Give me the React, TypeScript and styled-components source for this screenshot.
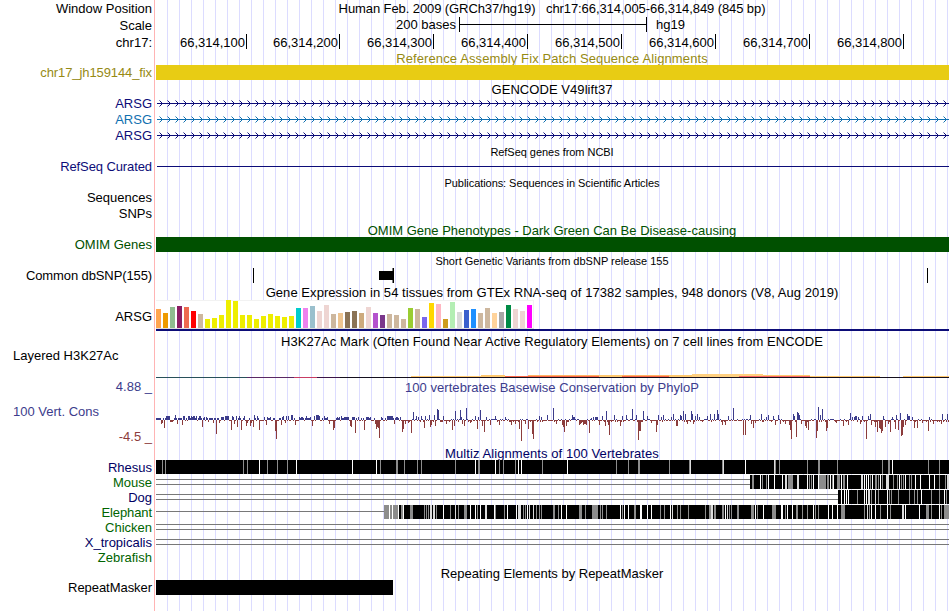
import type { ReactNode } from 'react'
import styled, { createGlobalStyle } from 'styled-components'

const NAVY = '#0c0c78'
const TEAL = '#1070b0'
const GREEN = '#005000'
const SPECIES_GREEN = '#006400'
const GOLD = '#968a14'
const CONS_BLUE = '#3c3c8c'
const CONS_RED = '#8c3c3c'

const DATA_START = 156
const DATA_WIDTH = 793

// ---- track data ----

const ticks = [246, 339, 433, 527, 621, 715, 809, 903]

const tissues: [string, number][] = [
	['#ffa54f', 19], ['#ee9a00', 15], ['#8fbc8f', 21], ['#8b1c62', 22], ['#ee6a50', 21], ['#ff0000', 17],
	['#cdb79e', 14], ['#eeee00', 9], ['#eeee00', 10], ['#eeee00', 13], ['#eeee00', 28], ['#eeee00', 27],
	['#eeee00', 13], ['#eeee00', 13], ['#eeee00', 9], ['#eeee00', 12], ['#eeee00', 14], ['#eeee00', 12],
	['#eeee00', 11], ['#eeee00', 12], ['#00cdcd', 20], ['#ee82ee', 20], ['#9ac0cd', 22], ['#eed5d2', 17],
	['#eed5d2', 23], ['#cdb79e', 14], ['#eec591', 15], ['#8b7355', 16], ['#8b7355', 17], ['#cdaa7d', 15],
	['#eed5d2', 21], ['#b452cd', 15], ['#7a378b', 13], ['#cdb79e', 14], ['#cdb79e', 13], ['#cdb79e', 9],
	['#9acd32', 20], ['#cdb79e', 19], ['#7a67ee', 11], ['#ffd700', 25], ['#ffb6c1', 24], ['#cd9b1d', 9],
	['#b4eeb4', 26], ['#d9d9d9', 16], ['#3a5fcd', 18], ['#1e90ff', 19], ['#cdb79e', 15], ['#cdb79e', 20],
	['#ffd39b', 15], ['#a6a6a6', 16], ['#008b45', 23], ['#eed5d2', 19], ['#eed5d2', 17], ['#ff00ff', 23],
]

// x, y inside the row, width, height, colour
const histone: [number, number, number, number, string][] = [
	[411, 27, 70, 1, '#ffc86e'], [481, 26, 24, 2, '#ffc86e'], [505, 27, 94, 1, '#fa6446'], [528, 26, 71, 1, '#ffb464'],
	[599, 26, 23, 2, '#ffc86e'], [622, 27, 47, 1, '#fa6446'], [622, 26, 47, 1, '#ffb464'], [669, 26, 23, 2, '#ffc86e'],
	[692, 25, 71, 3, '#ffd080'], [739, 27, 71, 1, '#fa6464'], [763, 26, 47, 1, '#ffc86e'],
	[810, 27, 70, 1, '#ffc86e'], [903, 27, 46, 1, '#ffc86e'],
	[156, 28, 91, 1, '#28505a'], [247, 28, 47, 1, '#5a2864'], [294, 28, 23, 1, '#c83c64'], [317, 28, 23, 1, '#3c1446'],
	[340, 28, 609, 1, '#140f1e'],
]

const conservation: [number, number][] = [
	[156, 2], [157, 2], [158, 2], [159, 2], [160, 2], [161, -4], [162, -3], [163, 2], [164, -8], [165, 2], [166, 4], [167, 4],
	[168, 4], [169, 4], [170, -2], [171, -2], [172, -2], [174, 2], [175, 5], [176, 2], [177, -4], [178, 2], [179, 2], [180, 2],
	[181, 2], [182, -5], [183, 4], [184, 4], [188, 4], [189, 4], [190, 2], [191, 4], [192, 3], [193, 4], [194, 4], [195, 2],
	[196, 4], [198, 2], [199, 4], [200, 4], [202, -7], [204, 3], [206, 3], [208, -2], [209, 2], [210, 2], [211, 2], [213, -3],
	[214, 2], [215, 2], [216, -14], [217, 2], [218, 2], [219, -3], [221, 3], [222, 3], [223, 3], [225, 4], [226, 4], [227, 4],
	[228, 4], [231, -10], [232, 4], [233, 3], [234, -4], [236, 4], [237, -7], [239, 4], [240, 2], [241, -10], [244, 4], [246, -6],
	[247, -3], [250, -6], [251, -3], [253, -7], [254, 5], [257, 4], [259, -10], [264, 3], [266, -5], [267, 3], [270, 3],
	[275, -11], [276, -19], [281, -5], [282, 3], [283, 4], [285, -3], [286, 4], [288, 4], [291, 5], [292, 5], [295, -5],
	[299, 3], [301, 3], [302, 3], [303, 2], [306, 4], [310, 3], [312, -6], [314, 4], [316, 5], [317, 5], [318, 5], [319, 4],
	[324, 4], [327, 3], [329, -4], [333, -10], [334, -8], [337, 3], [339, 3], [341, 4], [344, 3], [345, 3], [346, 3], [347, 3],
	[348, 3], [350, -6], [351, -7], [352, 3], [353, 3], [354, 3], [355, -13], [358, 3], [361, 2], [364, -10], [366, 3],
	[367, 3], [368, 3], [370, 3], [375, -4], [376, -9], [377, -7], [378, -8], [379, -18], [381, 3], [387, 4], [388, 4], [389, 4],
	[390, 4], [391, 4], [392, 4], [394, -4], [396, 3], [397, 3], [400, 3], [402, -12], [403, -9], [405, -4], [408, -3],
	[411, -13], [413, 8], [416, 4], [418, 3], [421, 4], [424, -8], [425, 4], [429, 5], [430, -7], [431, -5], [434, 5], [435, -6],
	[437, 11], [438, 10], [443, 4], [446, -4], [452, -10], [454, -6], [455, 9], [460, 10], [461, 3], [462, -4], [464, -6],
	[466, 12], [470, -3], [475, 4], [477, -9], [478, 3], [480, 10], [482, -6], [484, -12], [486, 3], [490, -5], [495, 4],
	[499, -5], [505, 3], [511, -5], [515, -4], [519, -9], [521, -21], [525, -4], [528, -9], [532, -14], [533, -19], [539, 4],
	[541, 3], [547, 5], [553, 12], [556, -4], [562, -5], [563, -7], [564, -12], [566, -6], [572, 5], [573, 3], [574, 3],
	[579, -5], [580, -4], [581, -3], [583, -5], [584, -4], [585, -4], [586, -5], [589, -13], [591, 2], [593, 3], [595, 3], [596, 3],
	[597, 3], [599, -5], [602, 4], [605, -6], [606, 9], [608, -5], [609, -15], [614, 5], [620, -6], [622, 4], [626, 5],
	[632, 11], [636, 5], [638, -20], [639, -11], [640, -11], [643, 9], [647, 4], [651, -3], [656, -12], [657, -5], [658, 5],
	[661, 3], [663, 5], [671, 3], [673, 6], [676, -6], [677, -6], [680, 5], [681, 4], [683, 9], [685, 6], [687, -4], [691, 9],
	[692, 6], [693, -4], [695, 4], [697, 6], [699, 3], [707, 4], [710, 6], [714, 6], [717, 10], [718, 6], [722, -5], [725, -5],
	[728, 4], [733, 12], [743, -15], [745, -15], [750, 5], [751, -4], [753, -8], [755, -3], [761, 6], [766, 3], [768, 5],
	[773, 4], [775, -5], [778, 5], [780, -4], [785, -4], [789, -5], [790, -10], [791, -19], [793, 6], [794, 4], [796, -17],
	[797, 8], [798, 7], [799, 5], [801, -4], [805, -6], [806, -8], [808, -10], [816, -18], [817, -11], [818, 13], [820, 5],
	[822, 11], [826, -11], [827, -8], [836, -3], [843, -6], [848, -5], [850, 7], [852, 3], [854, 3], [855, 4], [856, 4],
	[858, 3], [860, -4], [862, 4], [866, -19], [868, 4], [870, 6], [871, -5], [875, -7], [877, -12], [879, -8], [880, -9],
	[881, -13], [882, -11], [883, 4], [885, -7], [888, -4], [890, -12], [892, 3], [895, -9], [896, 5], [898, -10], [900, 7],
	[901, -16], [902, -15], [903, -7], [905, -5], [907, 6], [908, 4], [909, 4], [912, 3], [914, -8], [917, -8], [922, -3],
	[928, -11], [929, 3], [933, -4], [941, -4], [942, 6], [947, 6],
]

// x, width, kind: g = grey, l = light, w = white
type Stripe = [number, number, 'g' | 'l' | 'w']

const rhesus: Stripe[] = [
	[162, 1, 'g'], [165, 1, 'g'], [243, 1, 'g'], [247, 1, 'g'], [259, 1, 'w'], [267, 1, 'g'], [277, 1, 'g'], [287, 1, 'g'],
	[296, 1, 'w'], [352, 1, 'w'], [376, 1, 'w'], [380, 1, 'g'], [396, 2, 'g'], [404, 1, 'g'], [417, 1, 'g'], [421, 1, 'g'],
	[455, 1, 'g'], [475, 1, 'w'], [478, 2, 'g'], [495, 1, 'w'], [499, 1, 'g'], [503, 1, 'g'], [515, 1, 'g'], [518, 1, 'w'],
	[521, 1, 'w'], [542, 1, 'g'], [567, 1, 'w'], [616, 1, 'g'], [628, 1, 'g'], [638, 2, 'g'], [669, 1, 'g'], [689, 1, 'g'],
	[690, 1, 'l'], [722, 1, 'g'], [723, 1, 'l'], [745, 1, 'w'], [774, 1, 'l'], [775, 1, 'g'], [779, 1, 'g'], [807, 1, 'g'],
	[818, 2, 'g'], [837, 1, 'g'], [882, 1, 'g'], [888, 2, 'g'], [892, 1, 'w'], [928, 1, 'g'], [939, 1, 'g'],
]

const mouse: Stripe[] = [
	[752, 2, 'g'], [760, 1, 'w'], [762, 1, 'g'], [766, 1, 'g'], [768, 1, 'w'], [774, 1, 'w'], [782, 1, 'w'], [785, 2, 'l'],
	[788, 5, 'g'], [797, 2, 'l'], [807, 1, 'w'], [809, 1, 'g'], [811, 1, 'g'], [813, 1, 'w'], [818, 1, 'w'], [819, 7, 'g'],
	[827, 2, 'g'], [830, 1, 'w'], [832, 1, 'g'], [833, 1, 'w'], [837, 3, 'g'], [841, 1, 'w'], [843, 2, 'g'], [847, 1, 'w'],
	[861, 2, 'l'], [864, 1, 'w'], [866, 1, 'w'], [868, 1, 'w'], [870, 1, 'g'], [872, 1, 'w'], [875, 2, 'g'], [878, 1, 'g'],
	[880, 1, 'w'], [882, 1, 'g'], [886, 3, 'l'], [893, 1, 'g'], [897, 1, 'g'], [899, 1, 'w'], [901, 1, 'g'], [903, 1, 'g'],
	[905, 1, 'w'], [909, 1, 'g'], [911, 1, 'g'], [915, 1, 'w'], [920, 1, 'w'], [929, 1, 'w'], [934, 1, 'w'], [939, 1, 'g'],
	[945, 1, 'g'], [947, 2, 'l'],
]

const dog: Stripe[] = [
	[841, 1, 'w'], [844, 1, 'w'], [846, 1, 'w'], [848, 1, 'w'], [857, 1, 'g'], [864, 1, 'w'], [866, 1, 'w'], [868, 2, 'l'],
	[871, 1, 'g'], [875, 1, 'l'], [878, 1, 'g'], [887, 1, 'w'], [889, 1, 'g'], [891, 1, 'g'], [898, 1, 'g'], [909, 1, 'g'],
	[914, 1, 'g'], [917, 1, 'g'], [921, 1, 'w'], [931, 1, 'g'], [939, 1, 'g'], [944, 1, 'w'], [946, 1, 'g'],
]

const elephant: Stripe[] = [
	[384, 5, 'g'], [389, 1, 'w'], [390, 2, 'g'], [392, 1, 'w'], [393, 5, 'g'], [398, 1, 'w'], [401, 2, 'g'], [403, 1, 'w'],
	[410, 3, 'g'], [424, 1, 'g'], [426, 1, 'g'], [428, 1, 'g'], [430, 2, 'l'], [433, 2, 'l'], [436, 1, 'g'], [443, 1, 'w'],
	[450, 1, 'g'], [455, 1, 'l'], [458, 1, 'g'], [464, 3, 'g'], [470, 1, 'w'], [475, 1, 'w'], [477, 1, 'g'], [480, 1, 'w'],
	[485, 2, 'l'], [494, 1, 'w'], [495, 1, 'g'], [504, 1, 'g'], [507, 1, 'w'], [516, 1, 'w'], [518, 3, 'l'], [523, 1, 'g'],
	[525, 1, 'g'], [527, 1, 'w'], [529, 1, 'l'], [533, 1, 'l'], [536, 1, 'g'], [539, 1, 'g'], [541, 1, 'g'], [553, 2, 'g'],
	[558, 1, 'g'], [561, 1, 'w'], [566, 1, 'w'], [579, 3, 'g'], [585, 1, 'g'], [592, 6, 'g'], [600, 1, 'g'], [602, 1, 'g'],
	[606, 1, 'g'], [620, 1, 'w'], [622, 1, 'g'], [624, 1, 'w'], [628, 1, 'w'], [634, 2, 'g'], [640, 2, 'w'], [647, 1, 'w'],
	[651, 1, 'w'], [660, 1, 'g'], [664, 1, 'g'], [670, 1, 'w'], [672, 1, 'l'], [677, 1, 'g'], [680, 1, 'g'], [688, 1, 'g'],
	[705, 1, 'g'], [709, 2, 'g'], [711, 2, 'l'], [714, 2, 'g'], [722, 2, 'g'], [725, 1, 'w'], [727, 1, 'l'], [729, 1, 'g'],
	[731, 1, 'g'], [737, 2, 'g'], [751, 3, 'g'], [755, 1, 'w'], [757, 1, 'g'], [763, 1, 'w'], [772, 4, 'g'], [781, 2, 'w'],
	[785, 1, 'g'], [787, 1, 'w'], [792, 1, 'w'], [796, 2, 'g'], [802, 1, 'g'], [807, 1, 'g'], [813, 1, 'w'], [815, 1, 'g'],
	[818, 1, 'g'], [828, 1, 'w'], [832, 1, 'w'], [837, 1, 'w'], [841, 4, 'g'], [864, 1, 'g'], [867, 1, 'l'], [869, 1, 'g'],
	[871, 1, 'w'], [875, 1, 'w'], [880, 1, 'g'], [887, 1, 'w'], [890, 1, 'g'], [902, 2, 'l'], [905, 1, 'w'], [919, 1, 'w'],
	[926, 3, 'g'], [931, 1, 'g'], [939, 1, 'w'], [941, 1, 'g'], [944, 5, 'g'],
]

const shades = { g: '#8c8c8c', l: '#dcdcdc', w: '#ffffff' }

// ---- drawings ----

const Drawing = ({ height, children }: { height: number, children: ReactNode }) => (
	<Svg width={DATA_WIDTH} height={height} viewBox={`${DATA_START} 0 ${DATA_WIDTH} ${height}`} shapeRendering="crispEdges">
		{children}
	</Svg>
)

const GeneArrows = ({ color }: { color: string }) => {
	const arrows = []
	for (let x = 159; x < 949; x += 8) {
		arrows.push(`M${x + 0.5} 4.5l3 3l-3 3`)
	}
	return (
		<Drawing height={16}>
			<rect x={157} y={7} width={792} height={1} fill={color} />
			<path d={arrows.join('')} fill="none" stroke={color} strokeWidth={1} shapeRendering="auto" />
		</Drawing>
	)
}

const Expression = () => (
	<Drawing height={31}>
		<rect x={156} y={0} width={378} height={28} fill="#ffffff" />
		<rect x={156} y={0} width={378} height={1} fill="#f2f2f2" />
		<rect x={533} y={0} width={1} height={28} fill="#f2f2f2" />
		<rect x={156} y={28} width={378} height={1} fill="#dcdcdc" />
		{tissues.map(([color, h], i) => (
			<rect key={i} x={156 + i * 7} y={28 - h} width={5} height={h} fill={color} />
		))}
		<rect x={156} y={29} width={793} height={2} fill={NAVY} />
	</Drawing>
)

const Conservation = () => {
	const known = new Map(conservation)
	const columns = []
	for (let x = DATA_START; x < 949; x++) {
		const seed = (x * 37 + (x * x) % 23) % 11
		const filler = x < 400 ? (seed < 4 ? 2 : -1) : (seed < 3 ? 1 : seed > 8 ? -2 : -1)
		columns.push({ x, value: known.get(x) ?? filler })
	}
	return (
		<Drawing height={50}>
			{columns.map(({ x, value }) => (
				<rect
					key={x}
					x={x}
					y={value > 0 ? 24 - value : 24}
					width={1}
					height={Math.abs(value)}
					fill={value > 0 ? CONS_BLUE : CONS_RED}
				/>
			))}
		</Drawing>
	)
}

const Alignment = ({ lines = [], from, stripes = [] }: { lines?: number[], from?: number, stripes?: Stripe[] }) => (
	<Drawing height={15}>
		{lines.map(y => (
			<rect key={y} x={156} y={y} width={(from ?? 949) - 156} height={1} fill="#787878" />
		))}
		{from && <rect x={from} y={0} width={949 - from} height={14} fill="#000000" />}
		{stripes.map(([x, w, kind]) => (
			<rect key={x} x={x} y={0} width={w} height={14} fill={shades[kind]} />
		))}
	</Drawing>
)

type TitleProps = {
	height: number
	color?: string
	small?: boolean
	spacing?: number
	drop?: number
	clipped?: boolean
	label?: ReactNode
	children: string
}

const TitleRow = ({ height, color, small, spacing, drop = 1, clipped, label, children }: TitleProps) => (
	<Row $height={height}>
		<Label>{label}</Label>
		<Title $color={color} $small={small} $spacing={spacing} $drop={drop} $clipped={clipped}>{children}</Title>
	</Row>
)

type TrackProps = { height: number, name: string, color?: string, spacing?: number, children?: ReactNode }

const Track = ({ height, name, color, spacing, children }: TrackProps) => (
	<Row $height={height}>
		<Label $color={color} $spacing={spacing}>{name}</Label>
		<Data>{children}</Data>
	</Row>
)

const App = () => {

	return (
		<Browser>
			<GlobalStyle />
			<TitleRow height={17} spacing={-0.09} drop={0} label="Window Position">{'Human Feb. 2009 (GRCh37/hg19)   chr17:66,314,005-66,314,849 (845 bp)'}</TitleRow>
			<Row $height={17}>
				<Label>Scale</Label>
				<ScaleBar>
					<ScaleText>200 bases</ScaleText>
					<ScaleLine />
					<ScaleText>hg19</ScaleText>
				</ScaleBar>
			</Row>
			<Row $height={17}>
				<Label>chr17:</Label>
				<Ruler>
					{ticks.map((x, i) => (
						<Tick key={x} $width={x + 1 - (i ? ticks[i - 1] + 1 : DATA_START)}>66,314,{i + 1}00</Tick>
					))}
				</Ruler>
			</Row>

			<TitleRow height={14} color={GOLD} spacing={0.11} clipped>Reference Assembly Fix Patch Sequence Alignments</TitleRow>
			<Track height={15} name="chr17_jh159144_fix" color={GOLD} spacing={-0.1}><Bar $color="#e8cc14" /></Track>

			<TitleRow height={16} spacing={0.06} drop={2}>GENCODE V49lift37</TitleRow>
			<Track height={16} name="ARSG" color={NAVY}><GeneArrows color={NAVY} /></Track>
			<Track height={16} name="ARSG" color={TEAL}><GeneArrows color={TEAL} /></Track>
			<Track height={16} name="ARSG" color={NAVY}><GeneArrows color={NAVY} /></Track>

			<TitleRow height={15} small spacing={-0.04}>RefSeq genes from NCBI</TitleRow>
			<Track height={16} name="RefSeq Curated" color={NAVY} spacing={-0.1}>
				<Drawing height={16}><rect x={157} y={7} width={792} height={1} fill={NAVY} /></Drawing>
			</Track>

			<TitleRow height={15} small spacing={-0.06}>Publications: Sequences in Scientific Articles</TitleRow>
			<Track height={16} name="Sequences" />
			<Track height={16} name="SNPs" />

			<TitleRow height={15} color={GREEN} clipped>OMIM Gene Phenotypes - Dark Green Can Be Disease-causing</TitleRow>
			<Track height={15} name="OMIM Genes" color={GREEN}><Bar $color={GREEN} /></Track>

			<TitleRow height={16} small>Short Genetic Variants from dbSNP release 155</TitleRow>
			<Track height={16} name="Common dbSNP(155)" spacing={-0.11}>
				<Drawing height={16}>
					<rect x={253} y={0} width={1} height={15} />
					<rect x={392} y={0} width={1} height={15} fill="#808080" />
					<rect x={379} y={3} width={14} height={9} />
					<rect x={393} y={0} width={1} height={15} />
					<rect x={927} y={0} width={1} height={15} />
				</Drawing>
			</Track>

			<TitleRow height={16} spacing={0.06}>Gene Expression in 54 tissues from GTEx RNA-seq of 17382 samples, 948 donors (V8, Aug 2019)</TitleRow>
			<Row $height={31}>
				<Label $drop={1}>ARSG</Label>
				<Data><Expression /></Data>
			</Row>

			<TitleRow height={18} spacing={0.05} drop={2}>H3K27Ac Mark (Often Found Near Active Regulatory Elements) on 7 cell lines from ENCODE</TitleRow>
			<Row $height={29}>
				<WiggleName $height={14}>Layered H3K27Ac</WiggleName>
				<Data>
					<Drawing height={29}>
						{histone.map(([x, y, w, h, color], i) => (
							<rect key={i} x={x} y={y} width={w} height={h} fill={color} />
						))}
					</Drawing>
				</Data>
			</Row>

			<TitleRow height={18} color={CONS_BLUE} spacing={0.04} label={<Limit $color={CONS_BLUE}>4.88 _</Limit>}>100 vertebrates Basewise Conservation by PhyloP</TitleRow>
			<Row $height={50}>
				<WiggleLabels>
					<WiggleName $height={32} $color={CONS_BLUE}>100 Vert. Cons</WiggleName>
					<Limit $color={CONS_RED} $inset={4}>-4.5 _</Limit>
				</WiggleLabels>
				<Data><Conservation /></Data>
			</Row>

			<TitleRow height={14} color="#000064" spacing={0.08}>Multiz Alignments of 100 Vertebrates</TitleRow>
			<Track height={15} name="Rhesus" color="#000064"><Alignment from={156} stripes={rhesus} /></Track>
			<Track height={15} name="Mouse" color={SPECIES_GREEN}><Alignment lines={[4, 9]} from={750} stripes={mouse} /></Track>
			<Track height={15} name="Dog" color="#000064"><Alignment lines={[4, 9]} from={838} stripes={dog} /></Track>
			<Track height={15} name="Elephant" color={SPECIES_GREEN} spacing={-0.1}><Alignment lines={[6]} from={384} stripes={elephant} /></Track>
			<Track height={15} name="Chicken" color={SPECIES_GREEN}><Alignment lines={[4, 9]} /></Track>
			<Track height={15} name="X_tropicalis" color="#000064"><Alignment lines={[4, 9]} /></Track>
			<Track height={15} name="Zebrafish" color={SPECIES_GREEN} />

			<TitleRow height={15}>Repeating Elements by RepeatMasker</TitleRow>
			<Track height={15} name="RepeatMasker" spacing={-0.05}><Bar $color="#000000" $width={237} /></Track>
		</Browser>
	)
}


export default App

const GlobalStyle = createGlobalStyle`
	body {
		margin: 0;
		background: #ffffff;
	}
`;

const Browser = styled.div`
	display: flex;
	flex-direction: column;
	width: 949px;
	height: 611px;
	overflow: hidden;
	font-family: "Liberation Sans", Arial, sans-serif;
	font-size: 13px;
	color: #000000;
	white-space: pre;
	background:
		linear-gradient(#ffb4b4, #ffb4b4) 154px 0 / 1px 100% no-repeat,
		repeating-linear-gradient(to right, #dcdcff 0 1px, transparent 1px 12px) 167px 0 / 782px 100% no-repeat;
`;

const Row = styled.div<{ $height: number }>`
	display: grid;
	grid-template-columns: 156px 793px;
	flex: none;
	height: ${p => p.$height}px;
	line-height: ${p => p.$height}px;
`;

const Label = styled.div<{ $color?: string, $spacing?: number, $drop?: number }>`
	padding-top: ${p => p.$drop ?? 0}px;
	padding-right: 4px;
	text-align: right;
	letter-spacing: ${p => p.$spacing ?? 0}px;
	color: ${p => p.$color ?? 'inherit'};
`;

// a clipped title loses its descenders where the solid bar below begins
const Title = styled.div<{ $color?: string, $small?: boolean, $spacing?: number, $drop: number, $clipped?: boolean }>`
	box-sizing: border-box;
	height: 100%;
	padding-top: ${p => p.$drop}px;
	padding-right: 1px;
	overflow: ${p => p.$clipped ? 'hidden' : 'visible'};
	text-align: center;
	font-size: ${p => p.$small ? 11 : 13}px;
	letter-spacing: ${p => p.$spacing ?? 0}px;
	color: ${p => p.$color ?? 'inherit'};
`;

const Data = styled.div`
	min-width: 0;
`;

const Svg = styled.svg`
	display: block;
`;

const Bar = styled.div<{ $color: string, $width?: number }>`
	width: ${p => p.$width ? `${p.$width}px` : '100%'};
	height: 15px;
	background: ${p => p.$color};
`;

const ScaleBar = styled.div`
	display: flex;
	padding-left: 240px;
	line-height: 16px;
`;

const ScaleText = styled.span`
	min-width: 63px;
`;

const ScaleLine = styled.div`
	box-sizing: border-box;
	width: 188px;
	height: 15px;
	margin-right: 9px;
	border: solid #000000;
	border-width: 0 1px;
	background: linear-gradient(#000000, #000000) 0 7px / 100% 1px no-repeat;
`;

const Ruler = styled.div`
	display: flex;
`;

const Tick = styled.div<{ $width: number }>`
	box-sizing: border-box;
	width: ${p => p.$width}px;
	height: 15px;
	padding-right: 1px;
	border-right: 1px solid #000000;
	text-align: right;
`;

const WiggleName = styled.div<{ $height: number, $color?: string }>`
	height: ${p => p.$height}px;
	padding-left: 13px;
	line-height: ${p => p.$height}px;
	color: ${p => p.$color ?? 'inherit'};
`;

const WiggleLabels = styled.div`
	display: flex;
	flex-direction: column;
	line-height: 18px;
`;

const Limit = styled.span<{ $color: string, $inset?: number }>`
	padding-right: ${p => p.$inset ?? 0}px;
	text-align: right;
	color: ${p => p.$color};
`;
